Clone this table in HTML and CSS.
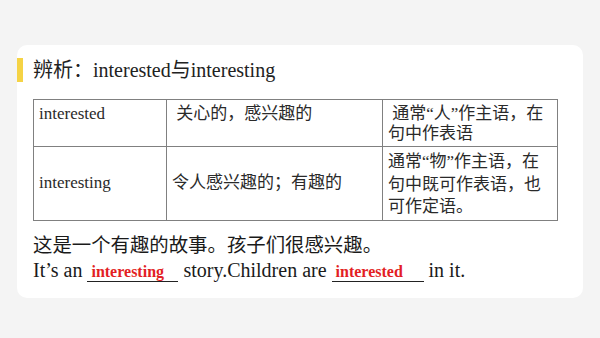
FILE: index.html
```html
<!DOCTYPE html>
<html lang="zh-CN">
<head>
<meta charset="utf-8">
<link rel="stylesheet" href="styles.css">
</head>
<body>
<div class="card">
  <div class="title">
    <span class="bar"></span>
    <span class="title-text">辨析：interested与interesting</span>
  </div>
  <table class="grid">
    <tr class="row1">
      <td class="c1">interested</td>
      <td class="c2">&nbsp;关心的，感兴趣的</td>
      <td class="c3">&nbsp;通常“人”作主语，在<br>句中作表语</td>
    </tr>
    <tr class="row2">
      <td class="c1 mid">interesting</td>
      <td class="c2 mid">令人感兴趣的；有趣的</td>
      <td class="c3">通常“物”作主语，在<br>句中既可作表语，也<br>可作定语。</td>
    </tr>
  </table>
  <p class="line zh">这是一个有趣的故事。孩子们很感兴趣。</p>
  <p class="line en">It’s an <span class="blank blank1">interesting</span> story.Children are <span class="blank blank2">interested</span> in it.</p>
</div>
</body>
</html>
```

FILE: styles.css
```css
html, body {
  margin: 0;
  padding: 0;
}
body {
  background: #f4f4f4;
  width: 600px;
  height: 338px;
  overflow: hidden;
  font-family: "Liberation Serif", "Noto Sans CJK SC", serif;
  color: #222;
}
.card {
  margin: 45px 0 0 17px;
  width: 566px;
  height: 253px;
  background: #fff;
  border-radius: 10px;
  box-sizing: border-box;
  padding-top: 13px;
  overflow: hidden;
}
.title {
  display: flex;
  align-items: center;
  height: 24px;
}
.bar {
  width: 6px;
  height: 24px;
  background: #f5d345;
}
.title-text {
  margin-left: 10px;
  font-size: 20px;
  line-height: 24px;
  white-space: nowrap;
}
.grid {
  margin: 17px 0 0 16px;
  width: 524px;
  border-collapse: collapse;
  table-layout: fixed;
  font-size: 17px;
  color: #2a2a2a;
}
.grid td {
  border: 1px solid #808080;
  padding: 4px 5px 0 5px;
  vertical-align: top;
  white-space: nowrap;
  box-sizing: border-box;
}
.grid .c1 { width: 133px; }
.grid .c2 { width: 216px; }
.grid .c3 { width: 175px; }
.row1 td {
  height: 47px;
  line-height: 20px;
}
.row2 td {
  height: 74px;
  line-height: 22.5px;
}
.grid td.mid {
  vertical-align: middle;
  padding-top: 0;
}
.line {
  margin: 0 0 0 16px;
  font-size: 20px;
  line-height: 25px;
  white-space: nowrap;
  color: #1a1a1a;
}
.zh {
  margin-top: 12px;
  font-size: 19.4px;
}
.blank {
  display: inline-block;
  box-sizing: border-box;
  border-bottom: 1px solid #222;
  padding-left: 4px;
  font-size: 16px;
  font-weight: bold;
  line-height: 18px;
  color: #e31e24;
  text-align: left;
}
.blank1 { width: 91px; }
.blank2 { width: 92px; }
```
